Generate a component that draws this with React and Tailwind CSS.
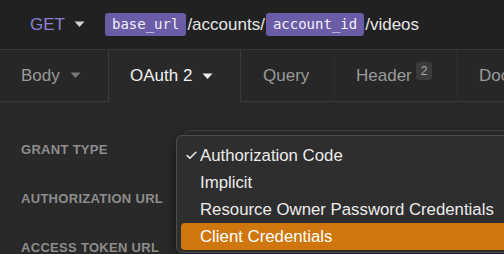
import { Check } from "lucide-react";

function Caret({ className = "" }) {
  return (
    <svg width="11" height="7" viewBox="0 0 11 7" className={className}>
      <path d="M0.5 0.5 L10.5 0.5 L5.5 6 Z" fill="currentColor" />
    </svg>
  );
}

function Tag({ children }) {
  return (
    <span className="inline-flex items-center h-[23px] px-[7px] rounded-[3px] bg-[#6a5ca6] text-[#f2f0fa] text-[14px] font-['DejaVu_Sans_Mono',monospace]">
      {children}
    </span>
  );
}

export default function App() {
  const items = [
    { label: "Authorization Code", checked: true },
    { label: "Implicit" },
    { label: "Resource Owner Password Credentials" },
    { label: "Client Credentials", active: true },
  ];

  return (
    <div className="w-[504px] h-[254px] overflow-hidden bg-[#292929] font-['Liberation_Sans',Arial,sans-serif] relative">
      {/* URL bar */}
      <div className="h-[50px] bg-[#212121] border-b border-[#383838] flex items-center pl-[30px]">
        <span className="text-[#8c80d8] text-[17px]">GET</span>
        <Caret className="text-[#d0d0d0] ml-[9px]" />
        <div className="flex items-center ml-[20px] text-[#e6e6e6] text-[17px]">
          <Tag>base_url</Tag>
          <span className="mx-[1px]">/accounts/</span>
          <Tag>account_id</Tag>
          <span className="ml-[1px]">/videos</span>
        </div>
      </div>

      {/* Tabs */}
      <div className="h-[52px] flex bg-[#272727] text-[17px]">
        <div className="w-[109px] shrink-0 flex items-center pl-[21px] gap-[10px] border-r border-b border-[#3a3a3a] text-[#9a9a9a]">
          Body
          <Caret className="text-[#777]" />
        </div>
        <div className="w-[132px] shrink-0 flex items-center pl-[21px] gap-[10px] border-r border-[#3a3a3a] text-[#f0f0f0] bg-[#292929]">
          OAuth 2
          <Caret className="text-[#f0f0f0]" />
        </div>
        <div className="w-[93px] shrink-0 flex items-center pl-[22px] border-b border-[#3a3a3a] text-[#9a9a9a]">
          Query
        </div>
        <div className="w-[122px] shrink-0 flex items-center pl-[21px] border-b border-l border-l-[#2d2d2d] border-[#3a3a3a] text-[#9a9a9a]">
          Header
          <span className="ml-[4px] -mt-[9px] h-[18px] px-[5px] rounded-[3px] bg-[#3b3b3b] text-[#a8a8a8] text-[12px] flex items-center">
            2
          </span>
        </div>
        <div className="flex-1 flex items-center pl-[22px] border-b border-l border-l-[#2d2d2d] border-[#3a3a3a] text-[#9a9a9a] whitespace-nowrap overflow-hidden">
          Docs
        </div>
      </div>

      {/* Fields */}
      <div className="pl-[21px] pt-[40px] flex flex-col gap-[33px] text-[13px] font-bold tracking-[0.3px] text-[#8d8d8d]">
        <div className="h-[16px] leading-[16px]">GRANT TYPE</div>
        <div className="h-[16px] leading-[16px]">AUTHORIZATION URL</div>
        <div className="h-[16px] leading-[16px]">ACCESS TOKEN URL</div>
      </div>

      {/* Select behind menu */}
      <div className="absolute left-[184px] top-[130px] w-[340px] h-[40px] rounded-[6px] border border-[#444] bg-[#2c2c2c]" />

      {/* Dropdown menu */}
      <div className="absolute left-[176px] top-[135px] w-[340px] h-[118px] rounded-[6px] border border-[#4c4c4c] bg-[#2e2e2e] shadow-[0_4px_14px_rgba(0,0,0,0.5)] px-[4px] pt-[6px]">
        {items.map((it) => (
          <div
            key={it.label}
            className={
              "h-[27px] flex items-center rounded-[4px] text-[16.8px] whitespace-nowrap " +
              (it.active ? "bg-[#cf760e] text-white" : "text-[#ececec]")
            }
          >
            <span className="w-[19px] flex justify-end pr-[2px]">
              {it.checked && <Check size={13} strokeWidth={3} className="text-[#ececec]" />}
            </span>
            {it.label}
          </div>
        ))}
      </div>
    </div>
  );
}
